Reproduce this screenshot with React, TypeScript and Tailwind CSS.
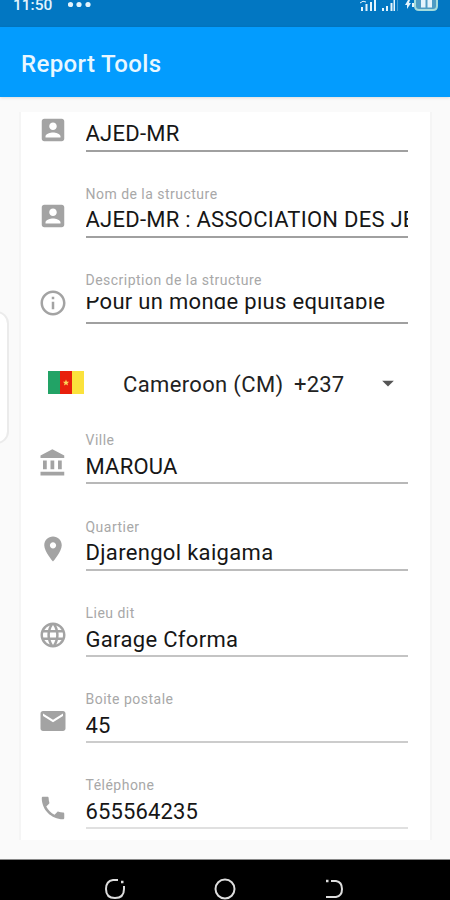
import { ReactNode } from "react";
import {
  MdArrowDropDown,
  MdEmail,
  MdInfoOutline,
  MdLanguage,
} from "react-icons/md";

type FieldData = {
  id: string;
  label: string;
  value: string;
  icon: ReactNode;
  line: string;
  text: string;
  scrolled?: boolean;
};

function SolidIcon({ d }: { d: string }) {
  return (
    <svg className="size-[30px]" viewBox="0 0 24 24" fill="currentColor">
      <path d={d} />
    </svg>
  );
}

const account = (
  <SolidIcon d="M3 5v14c0 1.1.89 2 2 2h14c1.1 0 2-.9 2-2V5c0-1.1-.9-2-2-2H5c-1.11 0-2 .9-2 2zm12 4c0 1.66-1.34 3-3 3s-3-1.34-3-3 1.34-3 3-3 3 1.34 3 3zm-9 8c0-2 4-3.1 6-3.1s6 1.1 6 3.1v1H6v-1z" />
);
const bank = (
  <SolidIcon d="M4 10v7h3v-7H4zm6 0v7h3v-7h-3zM2 22h19v-3H2v3zm14-12v7h3v-7h-3zm-4.5-9L2 6v2h19V6l-9.5-5z" />
);
const place = (
  <SolidIcon d="M12 2C8.13 2 5 5.13 5 9c0 5.25 7 13 7 13s7-7.75 7-13c0-3.87-3.13-7-7-7zm0 9.5c-1.38 0-2.5-1.12-2.5-2.5s1.12-2.5 2.5-2.5 2.5 1.12 2.5 2.5-1.12 2.5-2.5 2.5z" />
);
const phone = (
  <SolidIcon d="M6.62 10.79c1.44 2.83 3.76 5.14 6.59 6.59l2.2-2.2c.27-.27.67-.36 1.02-.24 1.12.37 2.33.57 3.57.57.55 0 1 .45 1 1V20c0 .55-.45 1-1 1-9.39 0-17-7.61-17-17 0-.55.45-1 1-1h3.5c.55 0 1 .45 1 1 0 1.25.2 2.45.57 3.57.11.35.03.74-.25 1.02l-2.2 2.2z" />
);

const structureFields: FieldData[] = [
  {
    id: "sigle",
    label: "",
    value: "AJED-MR",
    icon: account,
    line: "bg-[#a0a0a0]",
    text: "leading-[29px] tracking-[0.25px]",
  },
  {
    id: "nom",
    label: "Nom de la structure",
    value: "AJED-MR : ASSOCIATION DES JEUNES",
    icon: account,
    line: "bg-[#a0a0a0]",
    text: "leading-[29px] tracking-[0.25px]",
  },
  {
    id: "description",
    label: "Description de la structure",
    value: "Pour un monde plus équitable",
    icon: <MdInfoOutline className="size-[30px]" />,
    line: "bg-[#a0a0a0]",
    text: "leading-[22px] tracking-[0.3px]",
    scrolled: true,
  },
];

const contactFields: FieldData[] = [
  {
    id: "ville",
    label: "Ville",
    value: "MAROUA",
    icon: bank,
    line: "bg-[#b8b8b8]",
    text: "leading-[31px] tracking-[0.2px]",
  },
  {
    id: "quartier",
    label: "Quartier",
    value: "Djarengol kaigama",
    icon: place,
    line: "bg-[#bcbcbc]",
    text: "leading-[30px] tracking-[0.32px]",
  },
  {
    id: "lieu",
    label: "Lieu dit",
    value: "Garage Cforma",
    icon: <MdLanguage className="size-[30px]" />,
    line: "bg-[#c4c4c4]",
    text: "leading-[31px] tracking-[0.32px]",
  },
  {
    id: "boite",
    label: "Boite postale",
    value: "45",
    icon: <MdEmail className="size-[30px]" />,
    line: "bg-[#cccccc]",
    text: "leading-[31px] tracking-[0.1px]",
  },
  {
    id: "telephone",
    label: "Téléphone",
    value: "655564235",
    icon: phone,
    line: "bg-[#e0e0e0]",
    text: "leading-[31px] tracking-[0.15px]",
  },
];

function StatusBar() {
  return (
    <div className="flex h-[27px] shrink-0 items-start bg-[#0277c2] pl-[13px] pr-3 text-[#e3f4fd]">
      <span className="-mt-[7px] w-[55px] text-[15.5px] font-medium leading-6">
        11:50
      </span>
      <svg className="h-5 w-6" viewBox="0 0 24 20" fill="currentColor">
        <circle cx="2.5" cy="4.5" r="2.6" />
        <circle cx="11" cy="4.5" r="2.6" />
        <circle cx="20" cy="4.5" r="2.6" />
      </svg>
      <svg
        className="ml-auto h-5 w-[80px]"
        viewBox="0 0 80 20"
        fill="currentColor"
      >
        <path d="M3 7h2v4H3zM7.5 4h2v7h-2zM12 2h2v9h-2zM16 0h2v11h-2z" />
        <path
          d="M2 3q3-3 6-1"
          fill="none"
          stroke="currentColor"
          strokeWidth="1"
        />
        <path d="M24 8h2v3h-2zM28 6h2v5h-2zM32.5 3h2v8h-2zM35.500 0h1.500v11h-1.500z" />
        <path d="M39 0h1v11h-1z" opacity=".3" />
        <path d="M50 0l-3 5h2v4l4-6h-2l1-3z" />
        <path d="M54 3h2v4h-2z" />
        <path
          d="M57 0v6q0 4 4 4h14q4 0 4-4V0"
          fill="#4d9cc4"
          stroke="#a5dcdc"
          strokeWidth="2"
        />
        <path d="M63 0h4.5v7.5H63zM69.5 0H74v7.5h-4.500z" />
      </svg>
    </div>
  );
}

function Field({ field }: { field: FieldData }) {
  return (
    <div className="flex h-[86.2px] items-end">
      <div className="mb-[6.5px] mr-[17.5px] size-[30px] shrink-0 text-[#a3a3a3]">
        {field.icon}
      </div>
      <div className="w-[322.5px]">
        <label
          htmlFor={field.id}
          className="block h-4 whitespace-nowrap text-[14px] leading-4 tracking-[0.48px] text-[#a8a8a8]"
        >
          {field.label}
        </label>
        <div
          id={field.id}
          className={
            "mb-[3px] overflow-hidden whitespace-nowrap text-[22px] text-[#161616] " +
            (field.scrolled ? "mt-[9px] h-[22px] " : "mt-[3px] h-[28px] ") +
            field.text
          }
        >
          <span className={field.scrolled ? "block -mt-[6px]" : "block"}>
            {field.value}
          </span>
        </div>
        <div className={"h-[2px] " + field.line} />
      </div>
    </div>
  );
}

function CountryPicker() {
  return (
    <div className="flex h-[74px] items-end">
      <svg className="mb-1 ml-[10px] h-[23px] w-9" viewBox="0 0 36 23">
        <path d="M0 0h12v23H0z" fill="#22a366" />
        <path d="M12 0h12v23H12z" fill="#e8200c" />
        <path d="M24 0h12v23H24z" fill="#fbe23c" />
        <path
          d="M18 8.5l.9 2.2 2.3.1-1.8 1.5.6 2.3-2-1.3-2 1.3.6-2.3-1.8-1.5 2.3-.1z"
          fill="#fcd65a"
        />
      </svg>
      <span className="ml-[39px] w-[171px] whitespace-nowrap text-[22px] leading-[26px] tracking-[0.35px] text-[#222]">
        Cameroon (CM)
      </span>
      <span className="text-[22px] leading-[26px] tracking-[0.15px] text-[#222]">
        +237
      </span>
      <MdArrowDropDown className="mb-px ml-auto mr-[7px] size-[28px] text-[#555]" />
    </div>
  );
}

export default function App() {
  return (
    <div className="relative flex h-[900px] w-[450px] flex-col overflow-hidden bg-[#fafafa] font-['Roboto',sans-serif]">
      <StatusBar />
      <header className="flex h-[69.5px] shrink-0 items-center bg-[#039cfe] pl-[21px] pt-[4px] shadow-[0_1px_3px_rgba(0,0,0,0.12)]">
        <h1 className="text-[24px] font-medium leading-8 tracking-[0.35px] text-[#e8f7ff]">
          Report Tools
        </h1>
      </header>

      <main className="ml-[19px] mt-[15.5px] flex h-[728px] w-[413px] shrink-0 flex-col overflow-hidden border-x-2 border-[#f5f5f5] bg-white pl-[17px] pr-[21px]">
        <div className="-mt-[46.4px]">
          {structureFields.map((f) => (
            <Field key={f.id} field={f} />
          ))}
          <CountryPicker />
          {contactFields.map((f) => (
            <Field key={f.id} field={f} />
          ))}
        </div>
      </main>

      <nav className="mt-[19px] flex flex-1 items-start justify-between border-t border-[#888] bg-black px-[104px] pt-[18px]">
        <svg
          className="size-[22px]"
          viewBox="0 0 22 22"
          fill="none"
          stroke="#ddd"
          strokeWidth="2"
        >
          <path d="M14 2H9Q2 3 2 11q0 9 9 9t9-9V8" />
          <path d="M17 4h2.5" strokeWidth="2.5" />
        </svg>
        <svg
          className="size-[22px]"
          viewBox="0 0 22 22"
          fill="none"
          stroke="#ddd"
          strokeWidth="2"
        >
          <circle cx="11" cy="11" r="9.5" />
        </svg>
        <svg
          className="size-[22px]"
          viewBox="0 0 22 22"
          fill="none"
          stroke="#ddd"
          strokeWidth="2"
        >
          <path d="M7 3h5q6 1 6 8t-6 8H2" />
          <path d="M2 3h2.5" strokeWidth="2.5" />
        </svg>
      </nav>

      {/* edge panel handle */}
      <div className="absolute -left-4 top-[311px] h-[133px] w-[25px] rounded-[14px] border-2 border-[#ebebeb] bg-white" />
    </div>
  );
}
